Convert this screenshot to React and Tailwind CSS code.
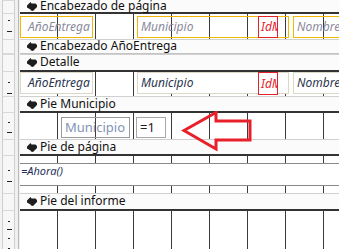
import React from "react";

const GRID =
  "bg-[repeating-linear-gradient(to_right,transparent_0px,transparent_37px,#3c3c3c_37px,#3c3c3c_38px)]";

function Icon() {
  return (
    <svg width="10" height="9" viewBox="0 0 10 9" className="shrink-0">
      <path d="M0 3.5 L3.5 0 L4.5 1.5 L8.5 1.5 L10 3 L10 5 L6 9 L4 8.5 L3.5 7.5 L0 5.5 Z" fill="#1e1e1e" />
    </svg>
  );
}

function Ruler({ ticks = [], band = false }) {
  return (
    <div className="w-[20px] shrink-0 self-stretch flex bg-[#f0f0f0]">
      <div className="w-[2px] bg-[#f3f3f3]" />
      <div
        className={
          "w-[13px] border-l border-r border-[#cfcfcf] flex flex-col " +
          (band ? "bg-[#f7f7f7] border-y border-y-[#d8d8d8]" : "bg-[#f7f7f7]")
        }
      >
        {ticks.map((t, i) => (
          <div
            key={i}
            style={{ marginTop: t.gap }}
            className={
              "h-[1px] bg-[#222] " + (t.long ? "ml-[4px] w-[5px]" : "ml-[5px] w-[2px]")
            }
          />
        ))}
      </div>
      <div className="w-[4px] bg-[#f0f0f0] border-r border-[#b8b8b8]" />
    </div>
  );
}

function Band({ label, h, dark = true, top = true }) {
  return (
    <div className="flex" style={{ height: h }}>
      <Ruler band />
      <div
        className={
          "flex-1 flex items-center gap-[3px] pl-[7px] bg-[#fbfbfb] text-[12px] leading-none text-[#111] " +
          (top ? "border-t border-[#d0d0d0] " : "") +
          (dark ? "border-b-2 border-b-[#333]" : "border-b border-b-[#c4c4c4]")
        }
      >
        <Icon />
        <span className="pb-[1px]">{label}</span>
      </div>
    </div>
  );
}

export default function App() {
  return (
    <div
      className="w-[339px] h-[249px] overflow-hidden bg-white flex flex-col"
      style={{ fontFamily: '"Segoe UI", "Noto Sans", sans-serif' }}
    >
      <Band label="Encabezado de página" h={14} top={false} />

      {/* Encabezado de página content */}
      <div className="flex h-[25px]">
        <Ruler ticks={[{ gap: 6 }, { gap: 10, long: true }]} />
        <div className={"flex-1 flex items-start pt-[2px] " + GRID}>
          <div className="w-[73px] h-[22px] border border-[#f2b705] flex items-center pl-[7px] italic text-[12px] text-[#8a8a9c] whitespace-nowrap overflow-hidden">
            AñoEntrega
          </div>
          <div className="ml-[44px] w-[152px] h-[22px] border border-[#f2b705] flex items-center italic text-[12px] text-[#8a8a9c] relative">
            <span className="pl-[3px]">Municipio</span>
            <div className="absolute left-[120px] top-[-1px] w-[20px] h-[22px] border border-[#e3212b] overflow-hidden italic text-[#e3212b] pl-[2px] flex items-center whitespace-nowrap">
              IdMunicipio
            </div>
          </div>
          <div className="ml-[4px] flex-1 h-[22px] border border-r-0 border-[#f2b705] flex items-center pl-[3px] italic text-[12px] text-[#8a8a9c] whitespace-nowrap overflow-hidden">
            NombreEntidad
          </div>
        </div>
      </div>

      <Band label="Encabezado AñoEntrega" h={15} dark={false} />
      <Band label="Detalle" h={18} />

      {/* Detalle content */}
      <div className="flex h-[24px]">
        <Ruler ticks={[{ gap: 10 }, { gap: 10, long: true }]} />
        <div className={"flex-1 flex items-start " + GRID}>
          <div className="w-[73px] h-[22px] bg-white border border-[#dcd8c8] flex items-center pl-[7px] italic text-[12px] text-[#2b3550] whitespace-nowrap overflow-hidden">
            AñoEntrega
          </div>
          <div className="ml-[44px] w-[152px] h-[22px] bg-white border border-[#dcd8c8] flex items-center italic text-[12px] text-[#2b3550] relative">
            <span className="pl-[3px]">Municipio</span>
            <div className="absolute left-[120px] top-[-1px] w-[20px] h-[23px] bg-white border border-[#e3212b] overflow-hidden italic text-[#e3212b] pl-[2px] flex items-center whitespace-nowrap">
              IdMunicipio
            </div>
          </div>
          <div className="ml-[4px] flex-1 h-[22px] bg-white border border-r-0 border-[#dcd8c8] flex items-center pl-[3px] italic text-[12px] text-[#2b3550] whitespace-nowrap overflow-hidden">
            NombreEntidad
          </div>
        </div>
      </div>

      <Band label="Pie Municipio" h={17} />

      {/* Pie Municipio content */}
      <div className="flex h-[26px]">
        <Ruler ticks={[{ gap: 9 }, { gap: 9, long: true }]} />
        <div className={"flex-1 flex items-start pt-[4px] relative " + GRID}>
          <div className="ml-[41px] w-[69px] h-[21px] border border-[#9a9a9a] flex items-center pl-[3px] text-[13px] text-[#8193b4]">
            Municipio
          </div>
          <div className="ml-[6px] w-[30px] h-[21px] bg-white border border-[#a8a8a8] flex items-center pl-[3px] text-[13px] text-[#222]">
            =1
          </div>
          <svg
            className="absolute left-[161px] top-[-2px]"
            width="72"
            height="42"
            viewBox="0 0 72 42"
          >
            <polygon
              points="3,19.5 35,1.5 35,10 69,10 69,29 35,29 35,38"
              fill="none"
              stroke="#e8202a"
              strokeWidth="3"
              strokeLinejoin="miter"
            />
          </svg>
        </div>
      </div>

      <Band label="Pie de página" h={17} />

      {/* Pie de página content */}
      <div className="flex h-[37px]">
        <Ruler ticks={[{ gap: 14 }, { gap: 10, long: true }]} />
        <div className={"flex-1 flex flex-col " + GRID}>
          <div className="h-[7px]" />
          <div className="h-[23px] bg-white border-t border-b border-[#8a8a8a] pl-[1px] pt-[1px] italic text-[11px] leading-[12px] text-[#1f2f58]">
            =Ahora()
          </div>
        </div>
      </div>

      <Band label="Pie del informe" h={18} />

      {/* Pie del informe content */}
      <div className="flex flex-1">
        <Ruler ticks={[{ gap: 10 }, { gap: 7, long: true }, { gap: 8 }, { gap: 9 }]} />
        <div className={"flex-1 " + GRID} />
      </div>
    </div>
  );
}
